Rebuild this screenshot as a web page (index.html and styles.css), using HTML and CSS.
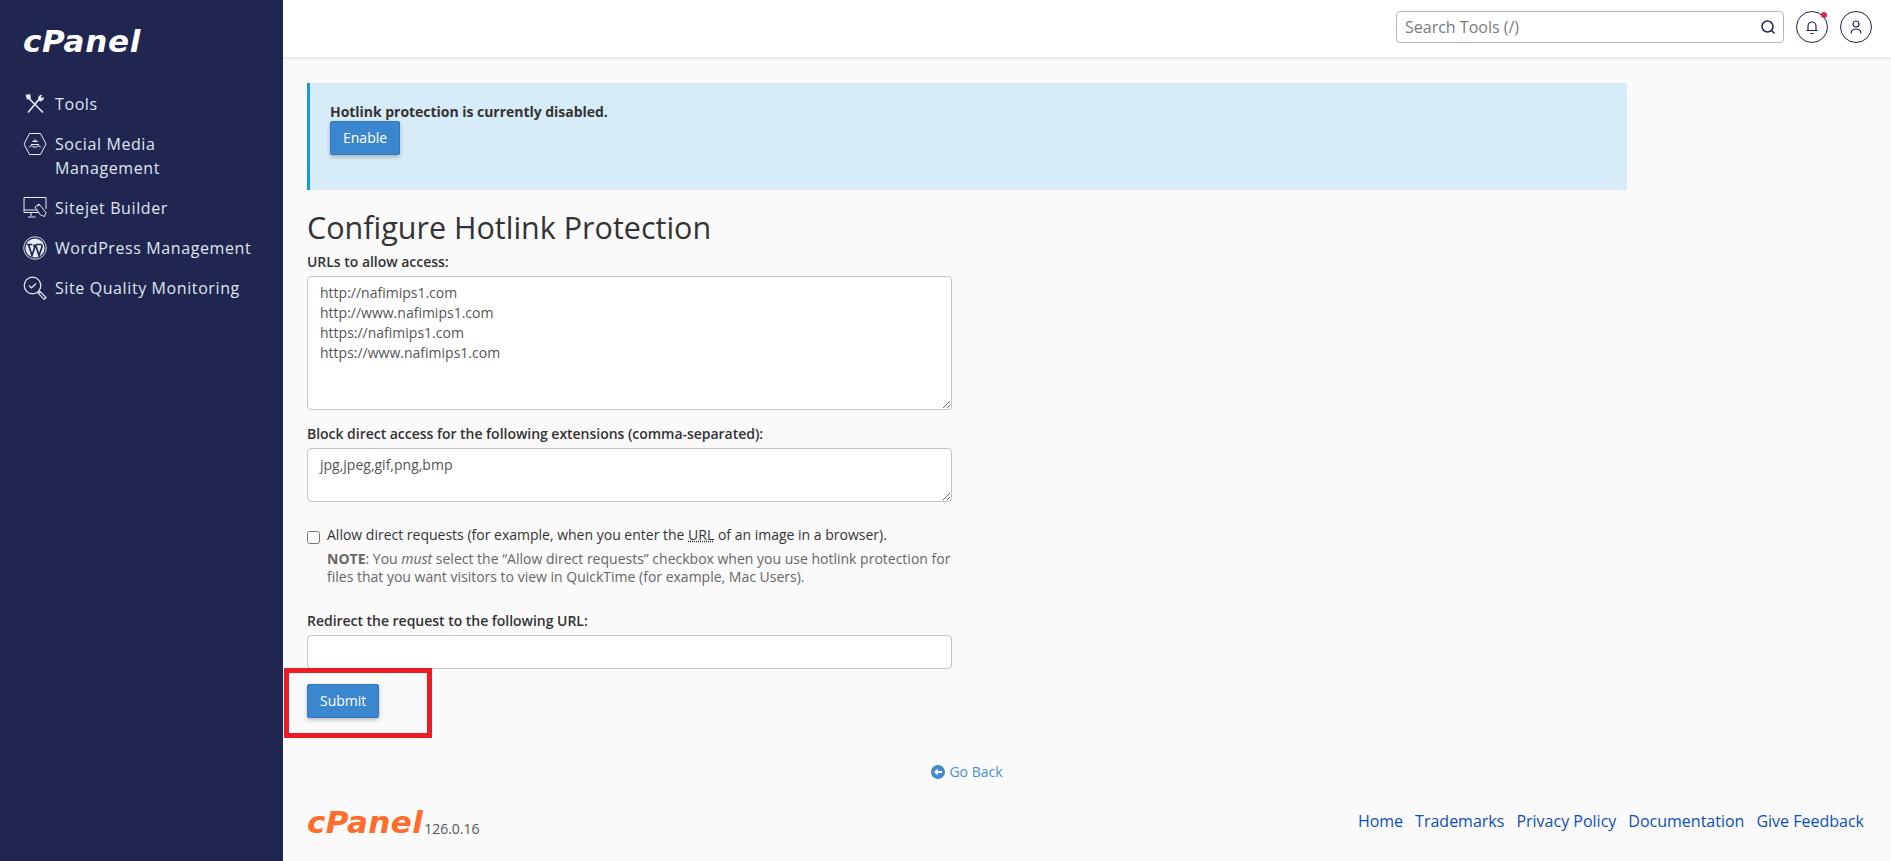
FILE: index.html
```html
<!DOCTYPE html>
<html lang="en">
<head>
<meta charset="utf-8">
<title>Hotlink Protection</title>
<link rel="stylesheet" href="styles.css">
</head>
<body>
<aside class="sidebar">
  <div class="brand">cPanel</div>
  <nav class="side-nav">
    <a class="side-item">
      <svg class="side-icon" viewBox="0 0 24 24" fill="none" stroke="#e8edf5" stroke-width="1.6" stroke-linecap="round"><path d="M5 5.500 19.500 20M17.500 5.500 5.500 20"/><path d="M3.500 3.500l3-.5.5 3-2.500.5z" fill="#e8edf5"/><path d="M15.500 7c-.5-2 1-4 3.500-4l-1.500 2 1 1.500 2-1c.3 2.500-2 4-4 3.500z" fill="#e8edf5" stroke-width=".6"/></svg>
      <span>Tools</span>
    </a>
    <a class="side-item">
      <svg class="side-icon" viewBox="0 0 24 24" fill="none" stroke="#e8edf5" stroke-width="1"><path d="M6.500 1.500h11L23 12l-5.500 10.500h-11L1 12z"/><path d="M9.500 9.500h5M8 12.500h8M6 15.500c1-2 3-2 4-1M18 15.500c-1-2-3-2-4-1M10 15h4"/><path d="M10 9.500c.3-2 3.700-2 4 0" /></svg>
      <span>Social Media<br>Management</span>
    </a>
    <a class="side-item">
      <svg class="side-icon" viewBox="0 0 24 24" fill="none" stroke="#e8edf5" stroke-width="1"><path d="M16 16.500H1V1.500h22V13"/><path d="M1 14h13M8 17v3M5 21h7.500" /><path d="M16 8l7 8.500-1.500 4-4-1.500-5.500-8z" fill="#20264f"/><path d="M14 10l3-1.500"/></svg>
      <span>Sitejet Builder</span>
    </a>
    <a class="side-item">
      <svg class="side-icon" viewBox="0 0 24 24"><circle cx="12" cy="12" r="11.300" fill="none" stroke="#e8edf5" stroke-width=".9"/><circle cx="12" cy="12" r="9.600" fill="#e8edf5"/><path d="M3.800 8.500h5.400M13 8.500h5.600M5.500 8.500 9 19.500l2.700-8-1.200-3M12.500 8.500 16 19.500l2.800-8c.6-1.500 0-2.700-1-3" fill="none" stroke="#20264f" stroke-width="1.700"/></svg>
      <span>WordPress Management</span>
    </a>
    <a class="side-item">
      <svg class="side-icon" viewBox="0 0 24 24" fill="none" stroke="#e8edf5" stroke-width="1.200"><circle cx="9.500" cy="9.500" r="8.300"/><path d="M6 9.500l2.500 2.500 4.500-4.500"/><path d="M15.500 15.500l1.500 1.500"/><path d="M17 15.500l6 6-1.800 1.800-6-6z"/></svg>
      <span>Site Quality Monitoring</span>
    </a>
  </nav>
</aside>
<div class="page">
  <header class="topbar">
    <div class="search">
      <input class="search-input" type="text" placeholder="Search Tools (/)">
      <svg class="search-icon" viewBox="0 0 16 16" fill="none" stroke="#20264f" stroke-width="1.500"><circle cx="7.500" cy="7.500" r="5.500"/><path d="M11.500 11.500l3 3"/></svg>
    </div>
    <button class="round-btn" type="button" aria-label="Notifications">
      <svg viewBox="0 0 16 16" fill="none" stroke="#20264f" stroke-width="1.200"><path d="M2.500 11.500h11M4 11.500V7a4 4 0 0 1 8 0v4.500M6.500 14.500h3"/></svg>
      <span class="dot"></span>
    </button>
    <button class="round-btn" type="button" aria-label="Account">
      <svg viewBox="0 0 16 16" fill="none" stroke="#20264f" stroke-width="1.200"><circle cx="8" cy="5" r="3"/><path d="M3 14.500c.5-6 9.500-6 10 0"/></svg>
    </button>
  </header>
  <main class="content">
    <div class="alert">
      <strong class="alert-text">Hotlink protection is currently disabled.</strong>
      <button class="btn enable" type="button">Enable</button>
    </div>
    <h1 class="title">Configure Hotlink Protection</h1>
    <form class="form">
      <label class="label">URLs to allow access:</label>
      <textarea class="field urls">http://nafimips1.com
http://www.nafimips1.com
https://nafimips1.com
https://www.nafimips1.com</textarea>
      <label class="label second">Block direct access for the following extensions (comma-separated):</label>
      <textarea class="field exts">jpg,jpeg,gif,png,bmp</textarea>
      <div class="check-row">
        <input class="check" type="checkbox">
        <div class="check-body">
          <div>Allow direct requests (for example, when you enter the <abbr class="abbr">URL</abbr> of an image in a browser).</div>
          <p class="note"><b>NOTE</b>: You <em>must</em> select the “Allow direct requests” checkbox when you use hotlink protection for files that you want visitors to view in QuickTime (for example, Mac Users).</p>
        </div>
      </div>
      <label class="label third">Redirect the request to the following URL:</label>
      <input class="field single" type="text">
      <div class="submit-wrap">
        <button class="btn" type="button">Submit</button>
        <span class="highlight"></span>
      </div>
    </form>
    <div class="back-row">
      <a class="back">
        <svg class="back-icon" viewBox="0 0 14 14"><circle cx="7" cy="7" r="7" fill="#3f8ad2"/><path d="M3 7l3.500-3.500V6H11v2H6.500v2.500z" fill="#fff"/></svg>
        Go Back
      </a>
    </div>
  </main>
  <footer class="footer">
    <div class="foot-brand"><span class="foot-logo">cPanel</span><span class="version">126.0.16</span></div>
    <nav class="foot-links">
      <a>Home</a><a>Trademarks</a><a>Privacy Policy</a><a>Documentation</a><a>Give Feedback</a>
    </nav>
  </footer>
</div>
</body>
</html>
```
FILE: styles.css
```css
* { box-sizing: border-box; }
html, body { height: 100%; }
body {
  margin: 0;
  display: flex;
  min-height: 861px;
  overflow: hidden;
  background: #fafafa;
  color: #333;
  font: 14px/20px "Open Sans", sans-serif;
}
.sidebar {
  width: 283px;
  flex: none;
  background: #20264f;
  color: #dfe6f2;
  padding: 23px 0 0 23px;
}
.brand {
  font: italic 700 31px/36px "DejaVu Sans", sans-serif;
  letter-spacing: .7px;
  color: #fff;
  height: 54px;
}
.side-nav { display: flex; flex-direction: column; gap: 16px; margin-top: 15px; }
.side-item {
  display: flex;
  align-items: flex-start;
  gap: 8px;
  font-size: 16px;
  line-height: 24px;
  letter-spacing: .6px;
}
.side-icon { width: 24px; height: 24px; flex: none; }
.page { flex: 1; min-width: 0; display: flex; flex-direction: column; }
.topbar {
  height: 57px;
  flex: none;
  background: #fff;
  box-shadow: 0 1px 4px rgba(0,0,0,.12);
  display: flex;
  align-items: flex-start;
  justify-content: flex-end;
  gap: 12px;
  padding: 11px 19px 0 0;
}
.search { position: relative; width: 388px; height: 32px; }
.search-input {
  width: 100%;
  height: 100%;
  border: 1px solid #b5b5c8;
  border-radius: 4px;
  padding: 0 30px 0 8px;
  font: 16px "Open Sans", sans-serif;
  color: #333;
  outline: 0;
}
.search-input::placeholder { color: #7b7b7b; opacity: 1; }
.search-icon { position: absolute; right: 8px; top: 8px; width: 16px; height: 16px; }
.round-btn {
  position: relative;
  width: 32px;
  height: 32px;
  border: 1px solid #20264f;
  border-radius: 50%;
  background: #fff;
  padding: 7px;
  display: flex;
}
.round-btn svg { width: 16px; height: 16px; }
.dot {
  position: absolute;
  top: 0;
  right: 0;
  width: 6px;
  height: 6px;
  border-radius: 50%;
  background: #e0284a;
}
.content { padding: 26px 24px 0; flex: 1; }
.alert {
  width: 1320px;
  height: 107px;
  background: #d7ecf9;
  border-left: 3px solid #179bd7;
  padding: 19px 20px;
}
.alert-text { display: block; color: #333; line-height: 19px; letter-spacing: -.03px; }
.btn {
  display: block;
  height: 34px;
  padding: 0 12px 2px;
  background: #3a87d0;
  border: 1px solid #2f78bd;
  border-radius: 2px;
  color: #fff;
  font: 14px "Open Sans", sans-serif;
  box-shadow: 0 2px 4px rgba(0,0,0,.25);
}
.title {
  margin: 17px 0 0;
  font: 400 30.500px/40px "Open Sans", sans-serif;
  color: #333;
}
.form { width: 645px; display: flex; flex-direction: column; }
.label { font-weight: 600; line-height: 20px; margin-top: 5px; letter-spacing: -.03px; }
.second { margin-top: 14px; }
.third { margin-top: 25px; }
.field {
  display: block;
  width: 100%;
  margin-top: 4px;
  background: #fff;
  border: 1px solid #c4c4c4;
  border-radius: 4px;
  color: #555;
  font: 14px/20px "Open Sans", sans-serif;
  padding: 6px 12px;
  outline: 0;
}
.urls { height: 134px; resize: vertical; }
.exts { height: 54px; resize: vertical; }
.single { height: 34px; }
.check-row { display: flex; gap: 7px; margin-top: 23px; }
.check { width: 13px; height: 13px; margin: 6px 0 0; flex: none; }
.check-body { line-height: 20px; font-size: 14px; }
.abbr { text-decoration: underline dotted; }
.note { margin: 5px 0 0; color: #666; font-size: 14px; line-height: 18px; }
.submit-wrap { position: relative; margin-top: 15px; height: 34px; }
.highlight {
  position: absolute;
  left: -23px;
  top: -16px;
  width: 148px;
  height: 70px;
  border: 5px solid #ed1c24;
  pointer-events: none;
}
.back-row { display: flex; justify-content: center; margin-top: 44px; width: 1320px; }
.back { display: flex; align-items: center; gap: 4px; color: #4a8fd6; }
.back-icon { width: 14px; height: 14px; }
.footer {
  display: flex;
  align-items: flex-start;
  justify-content: space-between;
  padding: 1px 27px 0 24px;
  height: 58px;
  flex: none;
}
.foot-brand { display: flex; align-items: flex-end; gap: 1px; }
.foot-logo {
  font: italic 700 31px/36px "DejaVu Sans", sans-serif;
  letter-spacing: .4px;
  color: #ff6c2c;
}
.version { color: #555; line-height: 22px; font-size: 14px; }
.foot-links { display: flex; gap: 12px; font-size: 16px; line-height: 24px; color: #0a4fb8; padding-top: 5px; }
```
